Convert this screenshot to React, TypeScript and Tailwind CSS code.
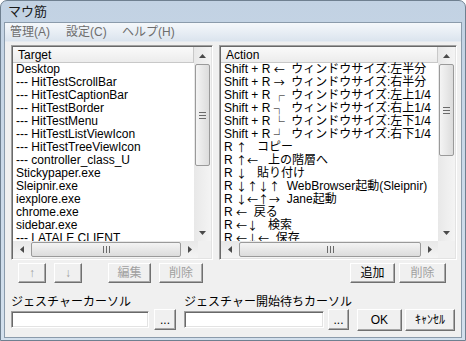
import React from 'react';

const targets = [
  'Desktop',
  '--- HitTestScrollBar',
  '--- HitTestCaptionBar',
  '--- HitTestBorder',
  '--- HitTestMenu',
  '--- HitTestListViewIcon',
  '--- HitTestTreeViewIcon',
  '--- controller_class_U',
  'Stickypaper.exe',
  'Sleipnir.exe',
  'iexplore.exe',
  'chrome.exe',
  'sidebar.exe',
  '--- LATALE CLIENT',
];

const actions = [
  'Shift + R ←  ウィンドウサイズ:左半分',
  'Shift + R →  ウィンドウサイズ:右半分',
  'Shift + R ┌  ウィンドウサイズ:左上1/4',
  'Shift + R ┐  ウィンドウサイズ:右上1/4',
  'Shift + R └  ウィンドウサイズ:左下1/4',
  'Shift + R ┘  ウィンドウサイズ:右下1/4',
  'R ↑   コピー',
  'R ↑←   上の階層へ',
  'R ↓   貼り付け',
  'R ↓↑↓↑  WebBrowser起動(Sleipnir)',
  'R ↓←↑→  Jane起動',
  'R ←  戻る',
  'R ←↓   検索',
  'R ←↓←  保存',
];

const raised =
  'border border-t-white border-l-white border-r-[#707070] border-b-[#707070] shadow-[inset_-1px_-1px_0_#a8a8a8] bg-[#f0f0f0]';
const sunken =
  'border border-t-[#a0a0a0] border-l-[#a0a0a0] border-r-white border-b-white shadow-[inset_1px_1px_0_#696969,inset_-1px_-1px_0_#e3e3e3]';

// arrows and corner marks come out full width, like the original
function RowText({ text }: { text: string }) {
  const parts = text.split(/([←→↑↓┌┐└┘]+)/);
  return (
    <>
      {parts.map((p, i) =>
        /^[←→↑↓┌┐└┘]+$/.test(p) ? (
          <span
            key={i}
            className="inline-block h-[13px] align-top font-['Noto_Sans_CJK_JP',sans-serif] text-[11px] leading-[13px]"
          >
            {p}
          </span>
        ) : (
          <span key={i}>{p}</span>
        )
      )}
    </>
  );
}

function Arrow({ dir }: { dir: 'up' | 'down' | 'left' | 'right' }) {
  const pts = {
    up: '0,4 3.5,0 7,4',
    down: '0,0 3.5,4 7,0',
    left: '4,0 0,3.5 4,7',
    right: '0,0 4,3.5 0,7',
  }[dir];
  const vert = dir === 'up' || dir === 'down';
  return (
    <svg width={vert ? 7 : 4} height={vert ? 4 : 7} viewBox={vert ? '0 0 7 4' : '0 0 4 7'}>
      <polygon points={pts} fill="#4a4a4a" />
    </svg>
  );
}

function Thumb({ vertical, className }: { vertical: boolean; className: string }) {
  return (
    <div
      className={
        'flex items-center justify-center rounded-[2px] border border-[#9a9a9a] ' +
        (vertical ? 'bg-gradient-to-r from-[#f4f4f4] to-[#dcdcdc] ' : 'bg-gradient-to-b from-[#f4f4f4] to-[#dcdcdc] ') +
        className
      }
    >
      {vertical ? (
        <svg width="7" height="7" viewBox="0 0 7 7">
          <rect x="0" y="0" width="7" height="1" fill="#6a6a6a" />
          <rect x="0" y="3" width="7" height="1" fill="#6a6a6a" />
          <rect x="0" y="6" width="7" height="1" fill="#6a6a6a" />
        </svg>
      ) : (
        <svg width="7" height="7" viewBox="0 0 7 7">
          <rect x="0" y="0" width="1" height="7" fill="#6a6a6a" />
          <rect x="3" y="0" width="1" height="7" fill="#6a6a6a" />
          <rect x="6" y="0" width="1" height="7" fill="#6a6a6a" />
        </svg>
      )}
    </div>
  );
}

function ListBox({
  header,
  rows,
  widthClass,
  vThumb,
  hThumb,
}: {
  header: string;
  rows: string[];
  widthClass: string;
  vThumb: string;
  hThumb: string;
}) {
  return (
    <div className={'flex h-[215px] flex-col bg-white p-[1px] ' + sunken + ' ' + widthClass}>
      <div className="flex min-h-0 flex-1">
        <div className="flex min-w-0 flex-1 flex-col overflow-hidden">
          <div className="flex h-[16px] shrink-0 items-center border-r border-b border-[#c8c8c8] bg-gradient-to-b from-[#fafafa] to-[#ececec] pl-[5px] leading-[16px]">
            {header}
          </div>
          <div className="flex flex-col pl-[3px]">
            {rows.map((r) => (
              <div key={r} className="h-[13px] shrink-0 whitespace-pre leading-[13px]">
                <RowText text={r} />
              </div>
            ))}
          </div>
        </div>
        <div className="flex w-[17px] shrink-0 flex-col bg-gradient-to-r from-[#e8e8e8] to-[#f4f4f4]">
          <div className="flex h-[17px] items-center justify-center">
            <Arrow dir="up" />
          </div>
          <div className="flex flex-1 flex-col px-[1px]">
            <Thumb vertical className={vThumb} />
          </div>
          <div className="flex h-[17px] items-center justify-center">
            <Arrow dir="down" />
          </div>
        </div>
      </div>
      <div className="flex h-[17px] shrink-0">
        <div className="flex flex-1 items-stretch bg-gradient-to-b from-[#e8e8e8] to-[#f4f4f4]">
          <div className="flex w-[17px] items-center justify-center">
            <Arrow dir="left" />
          </div>
          <div className="flex flex-1 py-[1px]">
            <Thumb vertical={false} className={hThumb} />
          </div>
          <div className="flex w-[17px] items-center justify-center">
            <Arrow dir="right" />
          </div>
        </div>
        <div className="w-[17px] bg-[#f0f0f0]" />
      </div>
    </div>
  );
}

function Btn({ label, w, disabled }: { label: string; w: string; disabled?: boolean }) {
  return (
    <div
      className={
        'flex h-[20px] items-center justify-center whitespace-nowrap ' +
        raised +
        ' ' +
        w +
        (disabled ? ' text-[#a0a0a0]' : ' text-black')
      }
    >
      {label}
    </div>
  );
}

export default function App() {
  return (
    <div className="flex h-[341px] w-[466px] flex-col overflow-hidden rounded-t-[7px] border border-[#6f8090] bg-gradient-to-b from-[#c2d2e3] to-[#d3e0ed] font-['Liberation_Sans','Noto_Sans_CJK_JP',sans-serif] text-[12px] text-black">
      <div className="flex h-[21px] shrink-0 items-center pl-[7px] text-[13px] text-[#1a1a1a]">マウ筋</div>
      <div className="mx-[3px] mb-[2px] flex flex-1 flex-col border border-[#8b9bab] bg-[#f0f0f0]">
        <div className="flex h-[19px] shrink-0 items-center border-b border-[#e6ebf1] bg-gradient-to-b from-[#f5f8fb] to-[#dbe4ee] pl-[5px] text-[#6d6d6d]">
          <span className="w-[56px]">管理(A)</span>
          <span className="w-[56px]">設定(C)</span>
          <span>ヘルプ(H)</span>
        </div>
        <div className="flex flex-col px-[6px] pt-[3px]">
          <div className="flex gap-[6px]">
            <ListBox header="Target" rows={targets} widthClass="w-[202px]" vThumb="h-[102px]" hThumb="w-[150px] ml-[1px]" />
            <ListBox header="Action" rows={actions} widthClass="flex-1" vThumb="h-[92px]" hThumb="w-[182px] ml-[1px]" />
          </div>
          <div className="mt-[3px] flex items-center">
            <div className="ml-[7px] flex items-center">
              <Btn label="↑" w="w-[28px]" disabled />
              <div className="w-[8px]" />
              <Btn label="↓" w="w-[28px]" disabled />
              <div className="w-[26px]" />
              <Btn label="編集" w="w-[43px]" disabled />
              <div className="w-[8px]" />
              <Btn label="削除" w="w-[44px]" disabled />
            </div>
            <div className="ml-auto mr-[9px] flex items-center gap-[4px]">
              <Btn label="追加" w="w-[45px]" />
              <Btn label="削除" w="w-[47px]" disabled />
            </div>
          </div>
          <div className="mt-[12px] flex items-end">
            <div className="flex flex-col">
              <div className="h-[14px] leading-[14px]">ジェスチャーカーソル</div>
              <div className="flex h-[21px] items-center gap-[5px]">
                <div className={'h-[17px] w-[138px] bg-white ' + sunken} />
                <Btn label="..." w="w-[22px] h-[21px]" />
              </div>
            </div>
            <div className="ml-[8px] flex flex-col">
              <div className="h-[14px] leading-[14px]">ジェスチャー開始待ちカーソル</div>
              <div className="flex h-[21px] items-center gap-[4px]">
                <div className={'h-[17px] w-[140px] bg-white ' + sunken} />
                <Btn label="..." w="w-[21px] h-[21px]" />
              </div>
            </div>
            <div className="ml-[5px] flex h-[21px] items-center gap-[3px]">
              <div className={'flex h-[22px] w-[45px] items-center justify-center ' + raised}>OK</div>
              <div className={'flex h-[22px] w-[50px] items-center justify-center whitespace-nowrap ' + raised}>ｷｬﾝｾﾙ</div>
            </div>
          </div>
        </div>
      </div>
    </div>
  );
}
